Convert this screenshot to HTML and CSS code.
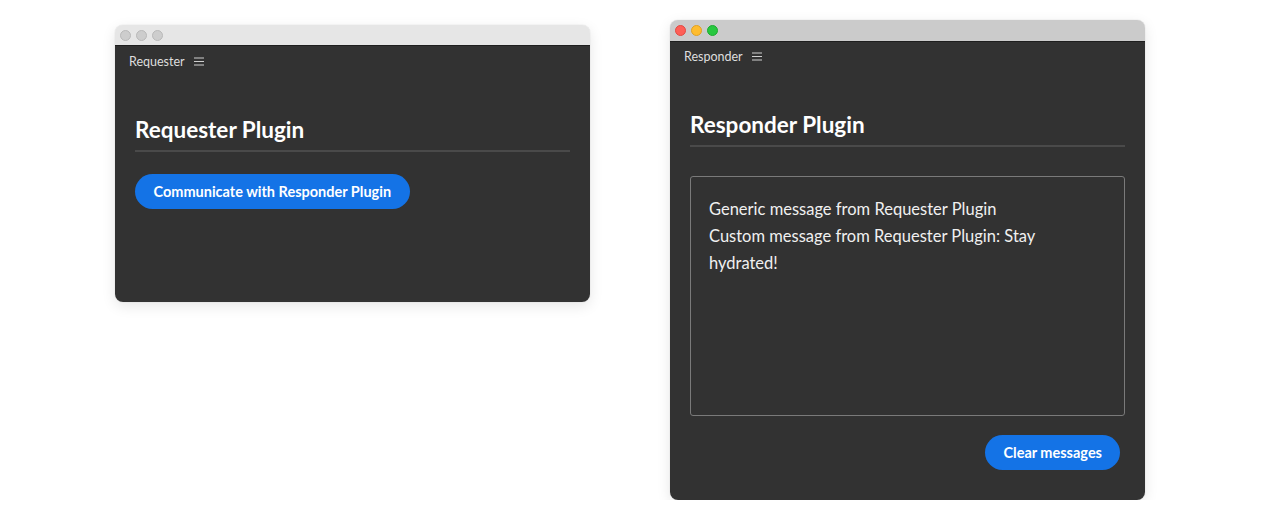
FILE: index.html
```html
<!DOCTYPE html>
<html>
<head>
<meta charset="utf-8">
<link rel="stylesheet" href="styles.css">
</head>
<body>
<div class="stage">
  <div class="window window-left">
    <div class="titlebar">
      <span class="light gray"></span><span class="light gray"></span><span class="light gray"></span>
    </div>
    <div class="panel">
      <div class="panel-header">
        <span class="panel-name">Requester</span>
        <svg class="menu" width="10" height="9" viewBox="0 0 10 9"><path d="M0 1h10M0 4.5h10M0 8h10" stroke="#cfcfcf" stroke-width="1"/></svg>
      </div>
      <div class="content">
        <h1 class="title">Requester Plugin</h1>
        <div class="actions-left">
          <button class="btn">Communicate with Responder Plugin</button>
        </div>
      </div>
    </div>
  </div>
  <div class="window window-right">
    <div class="titlebar">
      <span class="light red"></span><span class="light yellow"></span><span class="light green"></span>
    </div>
    <div class="panel">
      <div class="panel-header">
        <span class="panel-name">Responder</span>
        <svg class="menu" width="10" height="9" viewBox="0 0 10 9"><path d="M0 1h10M0 4.5h10M0 8h10" stroke="#cfcfcf" stroke-width="1"/></svg>
      </div>
      <div class="content content-right">
        <h1 class="title">Responder Plugin</h1>
        <div class="messages">
          <div>Generic message from Requester Plugin</div>
          <div>Custom message from Requester Plugin: Stay hydrated!</div>
        </div>
        <div class="actions-right">
          <button class="btn">Clear messages</button>
        </div>
      </div>
    </div>
  </div>
</div>
</body>
</html>
```
FILE: styles.css
```css
html, body {
  margin: 0;
  padding: 0;
  background: #ffffff;
  font-family: "Lato", "Open Sans", sans-serif;
}
.stage {
  display: flex;
  align-items: flex-start;
  gap: 80px;
  padding: 20px 0 0 115px;
}
.window {
  width: 475px;
  border-radius: 8px;
  overflow: hidden;
  box-shadow: 0 4px 14px rgba(0,0,0,0.10), 0 0 1px rgba(0,0,0,0.25);
  display: flex;
  flex-direction: column;
}
.window-left {
  margin-top: 5px;
  height: 277px;
}
.window-right {
  height: 480px;
}
.titlebar {
  height: 20px;
  display: flex;
  align-items: center;
  gap: 5px;
  padding-left: 5px;
  border-bottom: 1px solid #1e1e1e;
  flex: none;
}
.window-left .titlebar { background: #e6e6e6; }
.window-right .titlebar { background: #cbcbcb; height: 21px; }
.light {
  width: 11px;
  height: 11px;
  border-radius: 50%;
  box-sizing: border-box;
}
.light.gray { background: #cdcdcd; border: 1px solid #b9b9b9; }
.light.red { background: #fe5f57; border: 1px solid #e14942; }
.light.yellow { background: #febc2e; border: 1px solid #dfa023; }
.light.green { background: #28c840; border: 1px solid #1eaa30; }
.panel {
  flex: 1;
  background: #323232;
  display: flex;
  flex-direction: column;
}
.panel-header {
  height: 30px;
  display: flex;
  align-items: center;
  padding-left: 14px;
  gap: 9px;
  flex: none;
}
.window-right .panel-header {
  height: 28px;
}
.panel-name {
  color: #dedede;
  font-size: 12.5px;
}
.menu { display: block; }
.content {
  padding: 39px 20px 0 20px;
}
.content-right {
  padding-top: 40px;
  padding-bottom: 0;
}
.title {
  margin: 0;
  color: #ffffff;
  font-size: 22.5px;
  line-height: 30px;
  font-weight: 700;
  padding-bottom: 5px;
  border-bottom: 2px solid #4a4a4a;
}
.actions-left {
  margin-top: 22px;
}
.btn {
  background: #1473e6;
  color: #ffffff;
  border: none;
  border-radius: 18px;
  height: 35px;
  padding: 0 18.5px;
  font-family: "Lato", "Open Sans", sans-serif;
  font-weight: 700;
  font-size: 14.5px;
}
.actions-right .btn {
  padding: 0 18px;
}
.messages {
  margin-top: 29px;
  height: 240px;
  box-sizing: border-box;
  border: 1px solid #7a7a7a;
  border-radius: 3px;
  padding: 19px 40px 0 18px;
  color: #f0f0f0;
  font-size: 16.5px;
  line-height: 27px;
}
.actions-right {
  display: flex;
  justify-content: flex-end;
  margin-top: 19px;
  padding-right: 5px;
}
```
